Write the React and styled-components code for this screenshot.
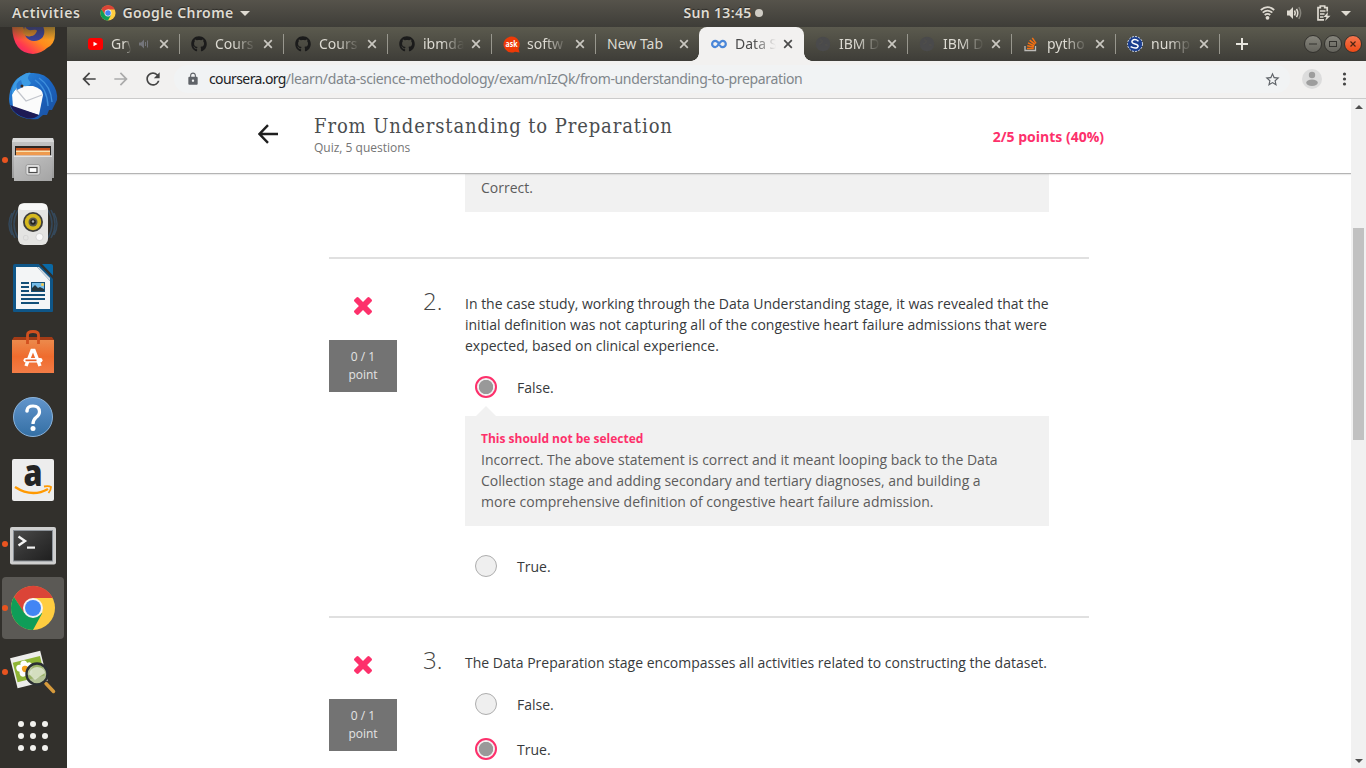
import React from "react";
import styled, { createGlobalStyle, css } from "styled-components";
import { FaGithub } from "react-icons/fa";
import { MdLock, MdStarBorder, MdRefresh, MdArrowBack, MdArrowForward } from "react-icons/md";

const Global = createGlobalStyle`
  html, body { margin: 0; padding: 0; overflow: hidden; background: #fff; }
  * { box-sizing: border-box; }
  svg { display: block; flex: none; }
`;

const uiFont = `"Noto Sans", "Open Sans", sans-serif`;
const pageFont = `"Open Sans", "Noto Sans", sans-serif`;
const pink = "#fd306b";

const Desktop = styled.div`
  width: 1366px;
  height: 768px;
  display: flex;
  flex-direction: column;
  overflow: hidden;
  font-family: ${uiFont};
`;

/* ---------- system bar ---------- */
const TopBar = styled.header`
  height: 27px;
  flex: none;
  display: grid;
  grid-template-columns: 1fr auto 1fr;
  align-items: center;
  padding: 0 15px 1px 12px;
  background: linear-gradient(#56534b, #3e3d38);
  color: #dfdbd2;
  font-weight: 600;
  font-size: 14px;
  line-height: 26px;
  text-shadow: 0 -1px 1px rgba(0, 0, 0, 0.45);
`;
const BarGroup = styled.div`
  display: flex;
  align-items: center;
`;
const BarText = styled.span`
  letter-spacing: ${(p) => p.$track || 0}px;
  margin-right: ${(p) => p.$gap || 0}px;
  white-space: nowrap;
`;
const AppLabel = styled(BarText)`
  margin-left: 6px;
`;
const Clock = styled.div`
  display: flex;
  align-items: center;
  gap: 3px;
  margin-left: 83px;
`;
const ClockDot = styled.i`
  width: 8px;
  height: 8px;
  border-radius: 50%;
  background: #cfccc4;
`;
const Caret = styled.i`
  border: 5px solid transparent;
  border-top-color: #dfdbd2;
  border-bottom: 0;
`;
const Tray = styled.div`
  display: flex;
  align-items: center;
  justify-content: flex-end;
  gap: 12px;
`;
const Battery = styled.svg`
  margin: 0 -2px 0 2px;
`;

const Body = styled.div`
  flex: 1;
  min-height: 0;
  display: flex;
`;

/* ---------- dock ---------- */
const Dock = styled.nav`
  width: 67px;
  flex: none;
  overflow: hidden;
  background: #32302c;
`;
const DockList = styled.div`
  margin-top: -27px;
  display: flex;
  flex-direction: column;
`;
const DockItem = styled.div`
  height: 64px;
  position: relative;
  display: flex;
  align-items: center;
  padding-left: 2px;
  ${(p) =>
    p.$running &&
    css`
      &::before {
        content: "";
        position: absolute;
        left: 2px;
        top: 29px;
        width: 6px;
        height: 6px;
        border-radius: 50%;
        background: #e95420;
        z-index: 1;
      }
    `}
`;
const DockTile = styled.div`
  width: 62px;
  height: 62px;
  border-radius: 4px;
  background: ${(p) => (p.$active ? "#5b5955" : "transparent")};
`;

/* ---------- browser ---------- */
const Browser = styled.main`
  flex: 1;
  min-width: 0;
  display: flex;
  flex-direction: column;
`;
const TabStrip = styled.div`
  height: 34px;
  flex: none;
  display: flex;
  padding-left: 9px;
  background: linear-gradient(#5b5a4e, #3e3d38);
`;
const TabBox = styled.div`
  width: 104px;
  height: 34px;
  position: relative;
  display: flex;
  align-items: center;
  padding: 0 12px 0 11px;
  color: ${(p) => (p.$active ? "#4a4a4a" : "#dcdad2")};
  font-size: 14px;
  ${(p) =>
    p.$active &&
    css`
      width: 105px;
      margin-left: -1px;
      padding-left: 12px;
      background: #f2f1f0;
      border-radius: 8px 8px 0 0;
      &::before,
      &::after {
        content: "";
        position: absolute;
        bottom: 0;
        width: 8px;
        height: 8px;
      }
      &::before {
        left: -8px;
        background: radial-gradient(circle at 0 0, transparent 7.5px, #f2f1f0 8px);
      }
      &::after {
        right: -8px;
        background: radial-gradient(circle at 100% 0, transparent 7.5px, #f2f1f0 8px);
      }
    `}
`;
const TabDivider = styled.i`
  position: absolute;
  right: 0;
  top: 7px;
  width: 1px;
  height: 20px;
  background: #98978e;
`;
const TabIcon = styled.span`
  width: 16px;
  height: 16px;
  margin-right: 8px;
  flex: none;
  color: #1b1b1b;
`;
const TabTitle = styled.span`
  width: ${(p) => p.$w || 41}px;
  flex: none;
  overflow: hidden;
  white-space: nowrap;
  line-height: 20px;
  ${(p) =>
    !p.$full &&
    css`
      mask-image: linear-gradient(90deg, #000 ${p.$solid ?? 45}%, transparent 100%);
    `}
`;
const TabClose = styled.span`
  margin-left: auto;
  margin-right: -1px;
  color: ${(p) => (p.$active ? "#4a4a4a" : "#c9c7c0")};
`;
const NewTab = styled.div`
  width: 44px;
  display: flex;
  align-items: center;
  justify-content: center;
`;
const WindowButtons = styled.div`
  margin-left: auto;
  padding-right: 4px;
  display: flex;
  align-items: center;
  gap: 2px;
`;
const WinBtn = styled.span`
  width: 18px;
  height: 18px;
  border-radius: 50%;
  border: 1px solid #33322e;
  background: ${(p) => (p.$close ? "linear-gradient(#f4764f, #ee4a16)" : "linear-gradient(#86857c, #65645d)")};
  display: flex;
  align-items: center;
  justify-content: center;
`;
const Toolbar = styled.div`
  height: 38px;
  flex: none;
  display: flex;
  align-items: center;
  background: #f2f1f0;
  border-bottom: 1px solid #cbcbcb;
  padding: 0 18px 1px 12px;
  color: #4b4b4b;
`;
const NavButtons = styled.div`
  display: flex;
  gap: 12px;
  margin-right: 11px;
  color: #454545;
  svg:nth-child(2) { color: #aaa; }
`;
const Omnibox = styled.div`
  flex: 1;
  height: 28px;
  border-radius: 14px;
  background: #f1f3f4;
  display: flex;
  align-items: center;
  padding: 0 9px 0 12px;
  color: #5f6368;
`;
const Url = styled.span`
  flex: 1;
  margin-left: 9px;
  font-size: 14px;
  line-height: 20px;
  color: #80868b;
  letter-spacing: -0.345px;
  white-space: nowrap;
`;
const UrlHost = styled.span`
  color: #202124;
  letter-spacing: -0.6px;
`;
const ToolEnd = styled.div`
  display: flex;
  align-items: center;
  gap: 14px;
  margin-left: 12px;
`;

/* ---------- page ---------- */
const Viewport = styled.div`
  flex: 1;
  min-height: 0;
  display: flex;
`;
const Page = styled.div`
  flex: 1;
  display: flex;
  flex-direction: column;
  overflow: hidden;
  background: #fff;
  font-family: ${pageFont};
  color: #373a3c;
`;
const PageHeader = styled.div`
  height: 75px;
  flex: none;
  display: flex;
  padding: 15px 247px 0 191px;
  border-bottom: 1px solid #b4b4b4;
  box-shadow: 0 1px 1px rgba(0, 0, 0, 0.08);
  z-index: 1;
`;
const BackLink = styled.span`
  width: 56px;
  padding-top: 10px;
`;
const Heading = styled.div`
  flex: 1;
`;
const Title = styled.h1`
  margin: 0;
  font-family: "DejaVu Serif Condensed", "DejaVu Serif", serif;
  font-stretch: condensed;
  font-weight: 400;
  font-size: 20px;
  line-height: 24px;
  letter-spacing: 0.9px;
  color: #4a4d4f;
  white-space: nowrap;
`;
const Subtitle = styled.div`
  margin-top: 1px;
  font-size: 12px;
  line-height: 18px;
  color: #757575;
`;
const Score = styled.div`
  margin-top: 12px;
  font-size: 14px;
  line-height: 21px;
  font-weight: 700;
  color: ${pink};
  white-space: nowrap;
`;
const Scroller = styled.div`
  flex: 1;
  min-height: 0;
  overflow: hidden;
  padding-left: 262px;
`;
const Content = styled.div`
  width: 760px;
`;
const Block = styled.section`
  display: flex;
  padding: ${(p) => (p.$first ? "0" : "34px")} 0 ${(p) => p.$bottom ?? 39}px;
  border-bottom: 2px solid #e0e0e0;
`;
const Status = styled.div`
  width: 68px;
  padding-top: 4px;
  display: flex;
  flex-direction: column;
  align-items: center;
`;
const PointBox = styled.div`
  margin-top: 25px;
  width: 68px;
  height: 52px;
  padding-top: 8px;
  background: #737373;
  color: #e4e4e4;
  font-size: 12px;
  line-height: 18px;
  text-align: center;
`;
const Num = styled.div`
  width: 68px;
  padding-left: 26px;
  margin-top: -9px;
  font-size: 24px;
  line-height: 33px;
  font-weight: 300;
  color: #444;
`;
const Main = styled.div`
  width: 584px;
`;
const Prompt = styled.p`
  margin: 0 0 20px;
  font-size: 14px;
  line-height: 21px;
  white-space: nowrap;
`;
const Option = styled.div`
  display: flex;
  align-items: center;
  height: 22px;
  padding-left: 10px;
  margin-top: ${(p) => p.$top || 0}px;
  font-size: 14px;
  line-height: 22px;
`;
const OptionLabel = styled.span`
  padding-top: 2px;
`;
const Radio = styled.span`
  width: 22px;
  height: 22px;
  border-radius: 50%;
  margin-right: 20px;
  border: ${(p) => (p.$on ? `2px solid ${pink}` : "1px solid #adadad")};
  background: ${(p) =>
    p.$on ? "radial-gradient(circle, #999 6.8px, #f1f1f1 7.5px)" : "#efefef"};
`;
const Feedback = styled.div`
  position: relative;
  margin-top: ${(p) => p.$top || 0}px;
  padding: ${(p) => p.$pad || "13px 16px 14px"};
  background: #f1f1f1;
  color: #5c5c5c;
  font-size: 14px;
  line-height: 21px;
  white-space: nowrap;
`;
const Pointer = styled.i`
  position: absolute;
  left: 11px;
  top: -10px;
  border: 10px solid transparent;
  border-top: 0;
  border-bottom-color: #f1f1f1;
`;
const FeedbackTitle = styled.div`
  font-size: 12px;
  font-weight: 700;
  line-height: 20px;
  color: ${pink};
`;
const ScrollBar = styled.div`
  width: 15px;
  flex: none;
  background: #f1f1f1;
  padding: 6px 0 5px;
  display: flex;
  flex-direction: column;
  align-items: center;
`;
const Thumb = styled.div`
  width: 11px;
  height: 212px;
  margin-top: 119px;
  background: #c1c1c1;
`;
const Arrow = styled.i`
  border: 4px solid transparent;
  ${(p) =>
    p.$down
      ? "margin-top:auto;border-top-color:#505050;border-bottom:0;"
      : "border-bottom-color:#505050;border-top:0;"}
`;

/* ---------- drawings ---------- */
const ChromeLogo = ({ cx = 12, cy = 12, r = 12 }) => (
  <g transform={`translate(${cx} ${cy}) scale(${r / 22})`}>
    <circle r="22" fill="#ffcd40" />
    <path d="M-19.05 -11A22 22 0 0 1 19.9 -10H0L-9 5Z" fill="#db4437" />
    <path d="M-19.05 -11A22 22 0 0 0 0 22L9.2 5.2L-8.7 5Z" fill="#0f9d58" />
    <circle r="10" fill="#f4f4f4" />
    <circle r="8" fill="#4285f4" />
  </g>
);

const Firefox = () => (
  <>
    <defs>
      <linearGradient id="fx" x1="1" y1="0" x2="0" y2="1">
        <stop offset="0.1" stopColor="#f3b52b" />
        <stop offset="0.5" stopColor="#ff8a1c" />
        <stop offset="0.75" stopColor="#ff3950" />
        <stop offset="1" stopColor="#e31587" />
      </linearGradient>
      <linearGradient id="fxshade" x1="0" y1="0" x2="0" y2="1">
        <stop offset="0" stopColor="#32302c" stopOpacity="0.6" />
        <stop offset="1" stopColor="#32302c" stopOpacity="0" />
      </linearGradient>
    </defs>
    <path d="M11 24Q11 53 32 54Q41 53 46 48Q54 44 54 34V20H11Z" fill="url(#fx)" />
    <path d="M22 26H42Q46 36 38 40Q30 43 25 37Z" fill="#39419b" />
    <path d="M24 26Q26 31 31 30Q36 29 36 31Q34 36 30 36Q26 38 22 33Z" fill="#e08a26" />
    <rect x="10" y="26" width="46" height="14" fill="url(#fxshade)" />
  </>
);

const Thunderbird = () => (
  <>
    <defs>
      <linearGradient id="tb" x1="0" y1="0" x2="1" y2="1">
        <stop offset="0" stopColor="#2f8fe0" />
        <stop offset="0.5" stopColor="#1b65c2" />
        <stop offset="1" stopColor="#1b4f9e" />
      </linearGradient>
    </defs>
    <path d="M8 35Q9 17 22 11Q26 8 30 9Q44 8 51 19Q57 27 56 36L53 42L51 46L48 46L46 51L42 51L37 55Q21 57 12 47Q8 42 8 35Z" fill="url(#tb)" />
    <path d="M17 22L32 22Q42 25 42 31L38 51L12 43L11 30Z" fill="#fbfbfb" />
    <path d="M14 24L25 37L41 31" fill="none" stroke="#c2c5cc" strokeWidth="1.200" />
    <path d="M9 41L38 51Q32 56 25 54Q13 51 9 41Z" fill="#1d1a55" />
    <path d="M11 31Q10 17 22 11Q27 8 30 9Q24 13 30 19Q28 23 22 22Q15 22 11 31Z" fill="#3c9be4" />
    <path d="M38 14Q50 22 51 38M34 16Q46 24 47 42" stroke="#3f8fdc" strokeWidth="1.400" fill="none" />
    <path d="M16 26Q14 18 20 16L22 23Z" fill="#2b7bd0" />
    <circle cx="21" cy="22" r="1.500" fill="#3a2a22" />
  </>
);

const Files = () => (
  <>
    <defs>
      <linearGradient id="fi" x1="0" y1="0" x2="0" y2="1">
        <stop offset="0" stopColor="#c7c7c7" />
        <stop offset="1" stopColor="#9b9b9b" />
      </linearGradient>
      <linearGradient id="fi2" x1="0" y1="0" x2="1" y2="1">
        <stop offset="0" stopColor="#c4c4c4" />
        <stop offset="1" stopColor="#a4a4a4" />
      </linearGradient>
    </defs>
    <path d="M12 10H52L53 14V50H11V14Z" fill="url(#fi)" />
    <path d="M12 10H52L53 14H11Z" fill="#dadada" />
    <rect x="14" y="18" width="36" height="10" fill="#2b2724" />
    <rect x="15" y="20" width="34" height="8" fill="#c9501a" />
    <rect x="15" y="22.500" width="34" height="1.500" fill="#f8e2b0" />
    <rect x="15" y="24" width="34" height="3.500" fill="#ee9a4e" />
    <path d="M13 27.500H51V53H13Z" fill="url(#fi2)" />
    <path d="M13 27.500H51V29H13Z" fill="#e3e3e3" />
    <rect x="25" y="36.500" width="14" height="10.500" rx="2" fill="#dedede" stroke="#8a8a8a" strokeWidth="0.700" />
    <rect x="28" y="39.500" width="8" height="5" fill="#fff" stroke="#4b4b4b" strokeWidth="1.200" />
  </>
);

const Rhythmbox = () => (
  <>
    <g fill="none" stroke="#35587c" strokeWidth="1.500" opacity="0.6">
      <path d="M14 18Q6 32 14 46M17 18Q9 32 17 46M50 18Q58 32 50 46M47 18Q55 32 47 46M11 21Q5 32 11 43M53 21Q59 32 53 43" />
    </g>
    <rect x="17" y="11" width="30" height="42" rx="6" fill="#e4e4e2" />
    <rect x="18" y="12" width="28" height="6" rx="3" fill="#f8f8f8" />
    <circle cx="32" cy="30" r="10" fill="#3e3e3c" />
    <circle cx="32" cy="30" r="8.200" fill="#d6b91d" />
    <circle cx="32" cy="30" r="4.500" fill="#5b5a4c" />
    <circle cx="32" cy="30" r="2.800" fill="#23231f" />
    <circle cx="32" cy="29.500" r="1.200" fill="#aaa" />
    <circle cx="38.500" cy="45" r="3.600" fill="#fafafa" stroke="#c4c4c4" strokeWidth="0.600" />
    <rect x="22.500" y="43.500" width="4.500" height="4.500" rx="1.500" fill="none" stroke="#d2d2d2" strokeWidth="0.800" />
  </>
);

const Writer = () => (
  <>
    <path d="M14 8H38L52 22V55Q52 56 51 56H13Q12 56 12 55V10Q12 8 14 8Z" fill="#0f5688" />
    <path d="M40 8H50Q52 8 52 10V20Z" fill="#0a69a6" />
    <path d="M38 8L52 23V19.500L41 8Z" fill="#32302c" />
    <path d="M15 11H36L49 25V53H15Z" fill="#f3f5f6" />
    <path d="M36 11L49 25V22L38 11Z" fill="#cfd8df" />
    <g fill="#124f78">
      <rect x="20" y="26" width="8" height="2" /><rect x="20" y="30" width="8" height="2" />
      <rect x="20" y="34" width="8" height="2" /><rect x="20" y="38" width="24" height="2" />
      <rect x="20" y="42" width="24" height="2" /><rect x="20" y="46" width="18" height="2" />
      <rect x="30" y="26" width="14" height="10" />
    </g>
    <rect x="31" y="27" width="12" height="8" fill="#75bce8" />
    <path d="M31 35V32L34 29L37 32L39 31L43 33V35Z" fill="#25363d" />
    <circle cx="41.500" cy="28.500" r="1.500" fill="#f0ca50" />
  </>
);

const Software = () => (
  <>
    <defs>
      <linearGradient id="sw" x1="0" y1="0" x2="0" y2="1">
        <stop offset="0" stopColor="#ec8a4c" />
        <stop offset="0.500" stopColor="#ef6c2e" />
        <stop offset="1" stopColor="#f37c46" />
      </linearGradient>
    </defs>
    <path d="M11 20L13 17H51L53 20Z" fill="#a33b16" />
    <rect x="11" y="20" width="42" height="33" fill="url(#sw)" />
    <path d="M26.500 24V15Q26.500 11.500 32 11.500Q37.500 11.500 37.500 15V24" fill="none" stroke="#d2501f" strokeWidth="2.800" />
    <path d="M25 46L31 30.500H33L39 46" fill="none" stroke="#fff" strokeWidth="3.400" />
    <rect x="22.500" y="38" width="19" height="4.500" rx="2.200" fill="#fff" />
    <rect x="24.500" y="39.500" width="11" height="1.700" fill="#e8602a" />
  </>
);

const Help = () => (
  <>
    <defs>
      <linearGradient id="he" x1="0" y1="0" x2="0" y2="1">
        <stop offset="0" stopColor="#6295cc" />
        <stop offset="1" stopColor="#346fa4" />
      </linearGradient>
    </defs>
    <circle cx="32" cy="33" r="19.500" fill="url(#he)" stroke="#8cb4dc" />
    <path d="M26 26.500Q26.500 22 32 22Q38.500 22 38.500 28Q38.500 31 35 33.500Q32 36 32 40" fill="none" stroke="#fff" strokeWidth="3.200" />
    <circle cx="26" cy="27" r="1.800" fill="#fff" />
    <circle cx="32" cy="44.500" r="2.500" fill="#fff" />
  </>
);

const Amazon = () => (
  <>
    <rect x="11" y="11" width="42" height="42" rx="2" fill="#ededed" />
    <text x="32" y="38" textAnchor="middle" fontFamily="Open Sans, sans-serif" fontWeight="800" fontSize="37" fill="#242424" textLength="19" lengthAdjust="spacingAndGlyphs">a</text>
    <path d="M14 39Q31 50 47 41" fill="none" stroke="#f90" strokeWidth="2.500" />
    <path d="M43 38.500Q48 37.500 50 39Q50 42 47.500 45" fill="none" stroke="#f90" strokeWidth="1.800" />
  </>
);

const Terminal = () => (
  <>
    <defs>
      <linearGradient id="te" x1="0" y1="0" x2="1" y2="1">
        <stop offset="0" stopColor="#4a4a4a" />
        <stop offset="0.500" stopColor="#333" />
        <stop offset="1" stopColor="#1f1f1f" />
      </linearGradient>
    </defs>
    <rect x="9" y="15" width="46" height="37.500" rx="2" fill="#cfcfcf" />
    <rect x="12" y="18" width="40" height="31.500" fill="#8d939a" />
    <rect x="13" y="19" width="38" height="29.500" fill="url(#te)" />
    <path d="M17.500 24.500L24 29L17.500 33.500" fill="none" stroke="#f2f2f2" strokeWidth="2.400" />
    <rect x="26" y="34.500" width="8" height="2.200" fill="#f2f2f2" />
  </>
);

const Viewer = () => (
  <>
    <g transform="rotate(-14 28 28)">
      <rect x="12" y="14" width="31" height="31" fill="#ededeb" />
      <rect x="13.500" y="19" width="28" height="20" fill="#8fb535" />
      <g fill="#fff">
        <circle cx="24" cy="23" r="3.500" /><circle cx="28.500" cy="26" r="3.500" /><circle cx="27" cy="31.500" r="3.500" />
        <circle cx="21" cy="31.500" r="3.500" /><circle cx="19" cy="26" r="3.500" />
      </g>
      <circle cx="24" cy="28" r="3.200" fill="#f3a01c" />
    </g>
    <path d="M45 43.500L52.500 51.500" stroke="#d69a3c" strokeWidth="3.500" strokeLinecap="round" />
    <circle cx="36" cy="34" r="10.500" fill="#9db278" fillOpacity="0.750" stroke="#2b2f33" strokeWidth="2.400" />
    <path d="M28 34Q30 27 36 27Q43 27 44 33L38 37L34 40Z" fill="#e2e9d6" opacity="0.800" />
  </>
);

const AppGrid = () => (
  <g fill="#f2f1ee">
    {[20, 32, 44].map((y) => [20, 32, 44].map((x) => <circle key={x + "-" + y} cx={x} cy={y} r="3" />))}
  </g>
);

const dockItems = [
  { id: "firefox", art: <Firefox /> },
  { id: "thunderbird", art: <Thunderbird /> },
  { id: "files", art: <Files />, running: true },
  { id: "rhythmbox", art: <Rhythmbox /> },
  { id: "writer", art: <Writer /> },
  { id: "software", art: <Software /> },
  { id: "help", art: <Help /> },
  { id: "amazon", art: <Amazon /> },
  { id: "terminal", art: <Terminal />, running: true },
  { id: "chrome", art: <ChromeLogo cx={32} cy={32} r={22} />, running: true, active: true },
  { id: "viewer", art: <Viewer />, running: true },
  { id: "apps", art: <AppGrid /> },
];

const YouTube = () => (
  <svg width="16" height="16" viewBox="0 0 16 16">
    <rect x="1" y="2" width="15" height="12" rx="3" fill="#f00" />
    <path d="M6.500 5.700V10.300L10.500 8Z" fill="#fff" />
  </svg>
);
const Ask = () => (
  <svg width="17" height="17" viewBox="0 0 17 17">
    <path d="M8.500 0.500A8 8 0 1 0 12 15.700L16.500 16.500L15.500 12.500A8 8 0 0 0 8.500 0.500Z" fill="#ee3a07" />
    <text x="8.500" y="11.300" fontSize="8" fontWeight="700" textAnchor="middle" fill="#fff" fontFamily="Open Sans, sans-serif" textLength="12" lengthAdjust="spacingAndGlyphs">ask</text>
  </svg>
);
const Coursera = () => (
  <svg width="16" height="16" viewBox="0 0 16 16">
    <path d="M8.200 8C6.800 5.500 5.800 4.800 4.300 4.800A3.200 3.200 0 0 0 4.300 11.200C7.300 11.200 8.200 4.800 11.600 4.800A3.200 3.200 0 0 1 11.600 11.200C10.300 11.200 9.400 10.400 8.600 9" fill="none" stroke="#4a86d8" strokeWidth="2.200" />
  </svg>
);
const Globe = () => (
  <svg width="16" height="16" viewBox="0 0 16 16">
    <circle cx="8" cy="8" r="7.300" fill="#4a4a4b" />
    <path d="M5 4Q8 4 7 6T4 8M10 9Q12 8 12 10" stroke="#4f4e4b" strokeWidth="1.600" fill="none" />
  </svg>
);
const StackOverflow = () => (
  <svg width="16" height="16" viewBox="0 0 16 16">
    <path d="M2 10V14.500H12.500V10" fill="none" stroke="#bcbbb8" strokeWidth="1.300" />
    <g stroke="#f47012" strokeWidth="1.500">
      <path d="M4 12.400H10.700M4.200 9.700L10.800 11.100M5 6.900L11.200 9.700M6.700 4.100L11.900 8.400M9.300 1.800L13 7.300" />
    </g>
  </svg>
);
const SciPy = () => (
  <svg width="16" height="16" viewBox="0 0 16 16">
    <circle cx="8" cy="8" r="7.500" fill="#1c3f8f" stroke="#dfe6f2" strokeWidth="0.900" strokeDasharray="2 1.200" />
    <path d="M11.500 5.200Q8 2.200 5.300 4.600Q3.800 7 8 8Q12.500 9.200 10.500 11.300Q8 13 3.600 10.600" fill="none" stroke="#fff" strokeWidth="1.500" />
  </svg>
);
const Speaker = () => (
  <svg width="10" height="10" viewBox="0 0 10 10">
    <path d="M0 3.500H2L5 0.500V9.500L2 6.500H0Z" fill="#74757a" />
    <path d="M6.500 3V7M8.500 1.500V8.500" stroke="#74757a" strokeWidth="1" />
  </svg>
);
const Cross = () => (
  <svg width="10" height="10" viewBox="0 0 10 10">
    <path d="M1.200 1.200L8.800 8.800M8.800 1.200L1.200 8.800" stroke="currentColor" strokeWidth="1.700" />
  </svg>
);
const SpeakerSlot = styled.span`
  margin-left: auto;
  margin-right: 3px;
`;

const tabs = [
  { icon: <YouTube />, title: "Gry", w: 20, audio: true, solid: 70 },
  { icon: <FaGithub size={16} />, title: "Cours" },
  { icon: <FaGithub size={16} />, title: "Cours" },
  { icon: <FaGithub size={16} />, title: "ibmda" },
  { icon: <Ask />, title: "softw" },
  { title: "New Tab", full: true },
  { icon: <Coursera />, title: "Data S", active: true },
  { icon: <Globe />, title: "IBM D" },
  { icon: <Globe />, title: "IBM D" },
  { icon: <StackOverflow />, title: "pytho" },
  { icon: <SciPy />, title: "nump" },
];

const Tab = ({ icon, title, full, active, w, audio, solid, divider }) => (
  <TabBox $active={active}>
    {icon && <TabIcon>{icon}</TabIcon>}
    <TabTitle $w={full ? 62 : w} $full={full} $solid={solid}>{title}</TabTitle>
    {audio && <SpeakerSlot><Speaker /></SpeakerSlot>}
    <TabClose $active={active}><Cross /></TabClose>
    {divider && <TabDivider />}
  </TabBox>
);

const WrongMark = () => (
  <svg width="18" height="18" viewBox="110 366 1188 1188">
    <path fill={pink} d="M1298 1322q0 40-28 68l-136 136q-28 28-68 28t-68-28l-294-294-294 294q-28 28-68 28t-68-28l-136-136q-28-28-28-68t28-68l294-294-294-294q-28-28-28-68t28-68l136-136q28-28 68-28t68 28l294 294 294-294q28-28 68-28t68 28l136 136q28 28 28 68t-28 68l-294 294 294 294q28 28 28 68z" />
  </svg>
);

const QuestionStatus = () => (
  <Status>
    <WrongMark />
    <PointBox>0 / 1<br />point</PointBox>
  </Status>
);

const Choice = ({ on, top, children }) => (
  <Option $top={top}>
    <Radio $on={on} />
    <OptionLabel>{children}</OptionLabel>
  </Option>
);

export default function App() {
  return (
    <Desktop>
      <Global />
      <TopBar>
        <BarGroup>
          <BarText $track={0.6} $gap={20}>Activities</BarText>
          <svg width="16" height="16" viewBox="0 0 16 16"><ChromeLogo cx={8} cy={8} r={7.6} /></svg>
          <AppLabel $track={0.4} $gap={6}>Google Chrome</AppLabel>
          <Caret />
        </BarGroup>
        <Clock>
          <BarText $track={0.35}>Sun 13:45</BarText>
          <ClockDot />
        </Clock>
        <Tray>
          <svg width="15" height="14" viewBox="0 0 15 14">
            <g fill="none" stroke="#dfdbd2" strokeWidth="1.700">
              <path d="M0.800 4Q7.500 -1.800 14.200 4M2.700 6.600Q7.500 2.500 12.300 6.600M4.700 9Q7.500 6.600 10.300 9" />
            </g>
            <circle cx="7.500" cy="11.800" r="1.900" fill="#dfdbd2" />
          </svg>
          <svg width="15" height="14" viewBox="0 0 15 14">
            <path d="M0 4.500H2.500L6 1V13L2.500 9.500H0Z" fill="#dfdbd2" />
            <path d="M7.500 4.500Q9 7 7.500 9.500M9.500 2.800Q12 7 9.500 11.200" stroke="#dfdbd2" strokeWidth="1.600" fill="none" />
            <path d="M11.800 1.200Q15.500 7 11.800 12.800" stroke="#86847c" strokeWidth="1.500" fill="none" />
          </svg>
          <Battery width="15" height="16" viewBox="0 0 15 16">
            <path d="M8 14.800H2V2.600H4.300V1H8.700V2.600H11.200V6.500M4 6H9.500M4 9H8.500M4 12H7.500" fill="none" stroke="#dfdbd2" strokeWidth="1.700" />
            <path d="M12 7L7.500 12H10.500L9 16L14.500 10.700H11.500Z" fill="#dfdbd2" />
          </Battery>
          <Caret />
        </Tray>
      </TopBar>
      <Body>
        <Dock>
          <DockList>
            {dockItems.map((d) => (
              <DockItem key={d.id} $running={d.running}>
                <DockTile $active={d.active}>
                  <svg width="62" height="62" viewBox="1 1 62 62">{d.art}</svg>
                </DockTile>
              </DockItem>
            ))}
          </DockList>
        </Dock>
        <Browser>
          <TabStrip>
            {tabs.map((t, i) => (
              <Tab key={i} {...t} divider={i !== 5 && i !== 6} />
            ))}
            <NewTab>
              <svg width="12" height="12" viewBox="0 0 12 12"><path d="M6 0V12M0 6H12" stroke="#e8e6df" strokeWidth="2" /></svg>
            </NewTab>
            <WindowButtons>
              <WinBtn><svg width="8" height="8" viewBox="0 0 8 8"><path d="M0 4H8" stroke="#33322e" /></svg></WinBtn>
              <WinBtn><svg width="8" height="8" viewBox="0 0 8 8"><rect x="0.500" y="1.500" width="7" height="5" fill="none" stroke="#33322e" /></svg></WinBtn>
              <WinBtn $close><svg width="6" height="6" viewBox="0 0 6 6"><path d="M0.500 0.500L5.500 5.500M5.500 0.500L0.500 5.500" stroke="#4a2413" strokeWidth="1.200" /></svg></WinBtn>
            </WindowButtons>
          </TabStrip>
          <Toolbar>
            <NavButtons>
              <MdArrowBack size={20} />
              <MdArrowForward size={20} />
              <MdRefresh size={20} />
            </NavButtons>
            <Omnibox>
              <MdLock size={14} />
              <Url><UrlHost>coursera.org</UrlHost>/learn/data-science-methodology/exam/nIzQk/from-understanding-to-preparation</Url>
              <MdStarBorder size={17} />
            </Omnibox>
            <ToolEnd>
              <svg width="20" height="20" viewBox="0 0 20 20">
                <circle cx="10" cy="10" r="10" fill="#dcdcdc" />
                <circle cx="10" cy="6" r="3.200" fill="#9d9d9d" />
                <ellipse cx="10" cy="13.800" rx="5.800" ry="3.200" fill="#9d9d9d" />
              </svg>
              <svg width="12" height="14" viewBox="0 0 12 14">
                <g fill="#454545"><circle cx="8.500" cy="2" r="1.600" /><circle cx="8.500" cy="7" r="1.600" /><circle cx="8.500" cy="12" r="1.600" /></g>
              </svg>
            </ToolEnd>
          </Toolbar>
          <Viewport>
            <Page>
              <PageHeader>
                <BackLink>
                  <svg width="20" height="20" viewBox="0 0 20 20">
                    <path d="M10 1.200L1.500 10L10 18.800M1.500 10H20" fill="none" stroke="#1f1f1f" strokeWidth="2.400" />
                  </svg>
                </BackLink>
                <Heading>
                  <Title>From Understanding to Preparation</Title>
                  <Subtitle>Quiz, 5 questions</Subtitle>
                </Heading>
                <Score>2/5 points (40%)</Score>
              </PageHeader>
              <Scroller>
                <Content>
                  <Block $first $bottom={45}>
                    <Status />
                    <Num />
                    <Main>
                      <Feedback $pad="3px 16px 14px">Correct.</Feedback>
                    </Main>
                  </Block>
                  <Block>
                    <QuestionStatus />
                    <Num>2.</Num>
                    <Main>
                      <Prompt>
                        In the case study, working through the Data Understanding stage, it was revealed that the<br />
                        initial definition was not capturing all of the congestive heart failure admissions that were<br />
                        expected, based on clinical experience.
                      </Prompt>
                      <Choice on>False.</Choice>
                      <Feedback $top={18}>
                        <Pointer />
                        <FeedbackTitle>This should not be selected</FeedbackTitle>
                        Incorrect. The above statement is correct and it meant looping back to the Data<br />
                        Collection stage and adding secondary and tertiary diagnoses, and building a<br />
                        more comprehensive definition of congestive heart failure admission.
                      </Feedback>
                      <Choice top={29}>True.</Choice>
                    </Main>
                  </Block>
                  <Block>
                    <QuestionStatus />
                    <Num>3.</Num>
                    <Main>
                      <Prompt>The Data Preparation stage encompasses all activities related to constructing the dataset.</Prompt>
                      <Choice>False.</Choice>
                      <Choice top={23} on>True.</Choice>
                    </Main>
                  </Block>
                </Content>
              </Scroller>
            </Page>
            <ScrollBar>
              <Arrow />
              <Thumb />
              <Arrow $down />
            </ScrollBar>
          </Viewport>
        </Browser>
      </Body>
    </Desktop>
  );
}
